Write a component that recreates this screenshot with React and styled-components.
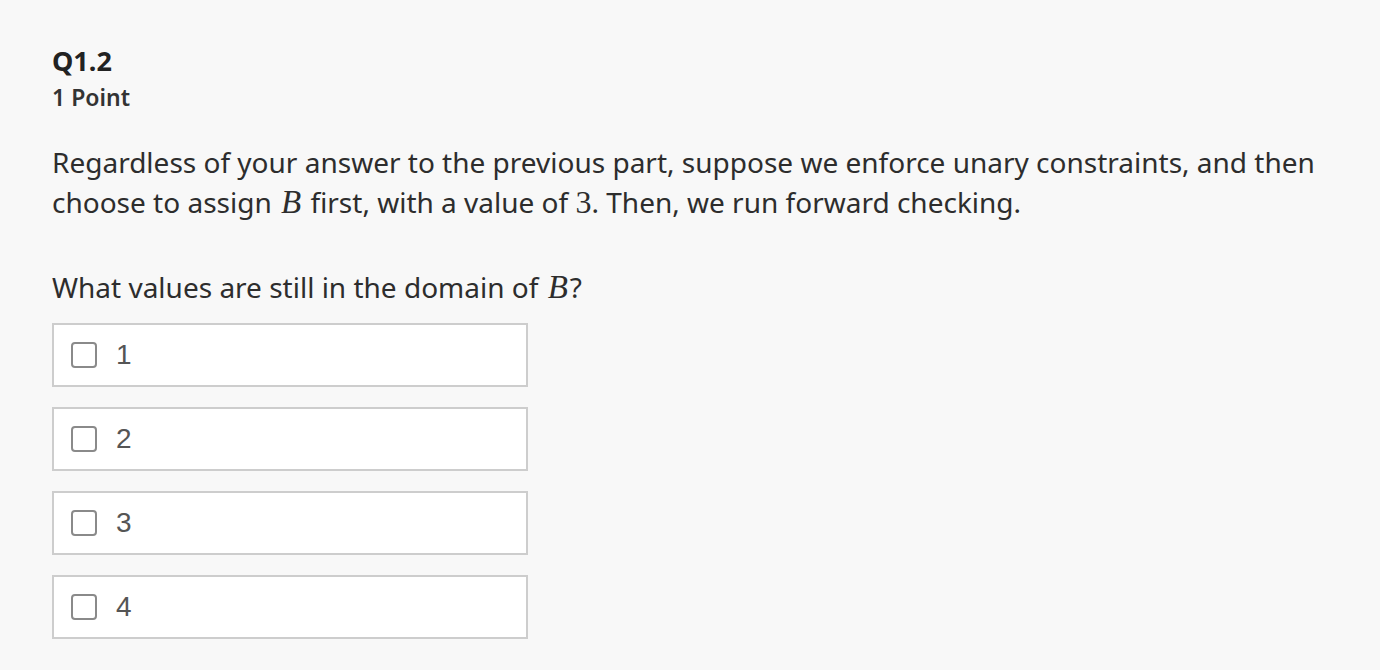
import React from "react";
import styled, { createGlobalStyle } from "styled-components";

const Global = createGlobalStyle`
  html, body {
    margin: 0;
    padding: 0;
    background: #f8f8f8;
  }
  body {
    font-family: "Noto Sans", "Open Sans", sans-serif;
    color: #2d2d2d;
  }
`;

const options = ["1", "2", "3", "4"];

const App = () => {
  return (
    <Page>
      <Global />
      <Header>
        <Title>Q1.2</Title>
        <Points>1 Point</Points>
      </Header>
      <Para>
        Regardless of your answer to the previous part, suppose we enforce unary
        constraints, and then choose to assign <MathVar>B</MathVar> first, with a
        value of <MathNum>3</MathNum>. Then, we run forward checking.
      </Para>
      <Prompt>
        What values are still in the domain of <MathVar>B</MathVar>?
      </Prompt>
      <Options>
        {options.map(o => (
          <Option key={o}>
            <Box />
            <OptionLabel>{o}</OptionLabel>
          </Option>
        ))}
      </Options>
    </Page>
  );
};

export default App;

const Page = styled.div`
  padding: 43px 52px 30px 52px;
  min-height: 670px;
  box-sizing: border-box;
`;

const Header = styled.div`
  display: flex;
  flex-direction: column;
`;

const Title = styled.div`
  font-size: 27px;
  font-weight: 700;
  line-height: 36px;
  color: #222;
`;

const Points = styled.div`
  font-size: 23px;
  font-weight: 600;
  line-height: 30px;
  margin-top: 3px;
  color: #333;
`;

const Para = styled.p`
  font-size: 28px;
  line-height: 40px;
  margin: 30px 0 0 0;
  width: 1300px;
`;

const Prompt = styled.p`
  font-size: 28px;
  line-height: 40px;
  margin: 45px 0 0 0;
`;

const MathVar = styled.span`
  font-family: "Liberation Serif", "DejaVu Serif", serif;
  font-style: italic;
  font-size: 33px;
  line-height: 1;
  padding: 0 2px;
`;

const MathNum = styled.span`
  font-family: "Liberation Serif", "DejaVu Serif", serif;
  font-size: 32px;
  line-height: 1;
`;

const Options = styled.div`
  display: flex;
  flex-direction: column;
  gap: 20px;
  margin-top: 16px;
`;

const Option = styled.label`
  display: flex;
  align-items: center;
  width: 476px;
  height: 64px;
  box-sizing: border-box;
  border: 2px solid #cdcdcd;
  background: #fff;
  padding-left: 17px;
`;

const Box = styled.span`
  width: 26px;
  height: 26px;
  box-sizing: border-box;
  border: 2px solid #8a8a8a;
  border-radius: 4px;
  background: #fff;
`;

const OptionLabel = styled.span`
  font-family: "Liberation Sans", Arial, sans-serif;
  font-size: 28px;
  color: #555;
  margin-left: 19px;
`;
